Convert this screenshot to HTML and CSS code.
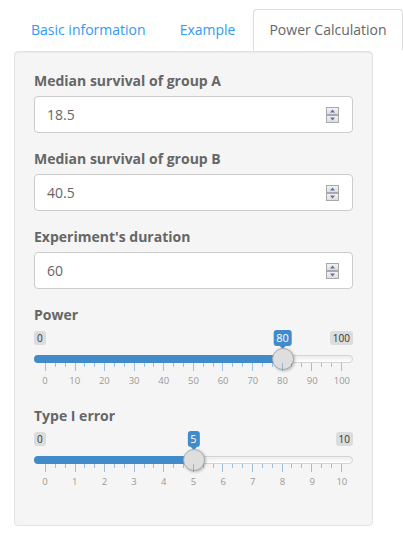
FILE: index.html
```html
<!DOCTYPE html>
<html>
<head>
<meta charset="utf-8">
<link rel="stylesheet" href="styles.css">
</head>
<body>
<div class="page">
  <ul class="tabs">
    <li class="tab"><a>Basic information</a></li>
    <li class="tab"><a>Example</a></li>
    <li class="tab active"><a>Power Calculation</a></li>
  </ul>
  <div class="well">
    <div class="group">
      <label class="lbl">Median survival of group A</label>
      <div class="num"><span class="val">18.5</span>
        <svg class="spin" width="13" height="16" viewBox="0 0 13 16"><defs><linearGradient id="sg" x1="0" y1="0" x2="0" y2="1"><stop offset="0" stop-color="#f4f4f4"/><stop offset="1" stop-color="#dcdcdc"/></linearGradient></defs><rect x="0.5" y="0.5" width="12" height="7" fill="url(#sg)" stroke="#a9a9a9"/><rect x="0.5" y="8.5" width="12" height="7" fill="url(#sg)" stroke="#a9a9a9"/><path d="M4 5.5h5L6.5 2.5z" fill="#5f70a8"/><path d="M4 10.5h5L6.5 13.5z" fill="#5f70a8"/></svg>
      </div>
    </div>
    <div class="group">
      <label class="lbl">Median survival of group B</label>
      <div class="num"><span class="val">40.5</span>
        <svg class="spin" width="13" height="16" viewBox="0 0 13 16"><rect x="0.5" y="0.5" width="12" height="7" fill="url(#sg)" stroke="#a9a9a9"/><rect x="0.5" y="8.5" width="12" height="7" fill="url(#sg)" stroke="#a9a9a9"/><path d="M4 5.5h5L6.5 2.5z" fill="#5f70a8"/><path d="M4 10.5h5L6.5 13.5z" fill="#5f70a8"/></svg>
      </div>
    </div>
    <div class="group">
      <label class="lbl">Experiment's duration</label>
      <div class="num"><span class="val">60</span>
        <svg class="spin" width="13" height="16" viewBox="0 0 13 16"><rect x="0.5" y="0.5" width="12" height="7" fill="url(#sg)" stroke="#a9a9a9"/><rect x="0.5" y="8.5" width="12" height="7" fill="url(#sg)" stroke="#a9a9a9"/><path d="M4 5.5h5L6.5 2.5z" fill="#5f70a8"/><path d="M4 10.5h5L6.5 13.5z" fill="#5f70a8"/></svg>
      </div>
    </div>
    <div class="group">
      <label class="lbl">Power</label>
      <div class="irs">
        <div class="irs-top"><span class="irs-mm">0</span><span class="irs-mm">100</span><span class="irs-single" style="--p:0.8">80</span></div>
        <div class="irs-line"><div class="irs-bar" style="--p:0.8"></div><span class="irs-handle" style="--p:0.8"></span></div>
        <div class="irs-grid">
          <div class="ticks"><i class="b"></i><i></i><i></i><i class="b"></i><i></i><i></i><i class="b"></i><i></i><i></i><i class="b"></i><i></i><i></i><i class="b"></i><i></i><i></i><i class="b"></i><i></i><i></i><i class="b"></i><i></i><i></i><i class="b"></i><i></i><i></i><i class="b"></i><i></i><i></i><i class="b"></i><i></i><i></i><i class="b"></i></div>
          <div class="nums"><span>0</span><span>10</span><span>20</span><span>30</span><span>40</span><span>50</span><span>60</span><span>70</span><span>80</span><span>90</span><span>100</span></div>
        </div>
      </div>
    </div>
    <div class="group">
      <label class="lbl">Type I error</label>
      <div class="irs">
        <div class="irs-top"><span class="irs-mm">0</span><span class="irs-mm">10</span><span class="irs-single" style="--p:0.5">5</span></div>
        <div class="irs-line"><div class="irs-bar" style="--p:0.5"></div><span class="irs-handle" style="--p:0.5"></span></div>
        <div class="irs-grid">
          <div class="ticks"><i class="b"></i><i></i><i></i><i class="b"></i><i></i><i></i><i class="b"></i><i></i><i></i><i class="b"></i><i></i><i></i><i class="b"></i><i></i><i></i><i class="b"></i><i></i><i></i><i class="b"></i><i></i><i></i><i class="b"></i><i></i><i></i><i class="b"></i><i></i><i></i><i class="b"></i><i></i><i></i><i class="b"></i></div>
          <div class="nums"><span>0</span><span>1</span><span>2</span><span>3</span><span>4</span><span>5</span><span>6</span><span>7</span><span>8</span><span>9</span><span>10</span></div>
        </div>
      </div>
    </div>
  </div>
</div>
</body>
</html>
```

FILE: styles.css
```css
* { box-sizing: border-box; }
html, body { margin: 0; background: #fff; }
body {
  font-family: "Open Sans", "Liberation Sans", sans-serif;
  font-size: 14px;
  line-height: 20px;
  color: #666;
}
.page { padding: 9px 0 0 14px; }
.tabs { list-style: none; margin: 0; padding: 0 0 0 1px; display: flex; }
.tab { margin-right: 2px; flex: none; }
.tab a {
  display: block;
  padding: 10px 15px;
  border: 1px solid transparent;
  border-radius: 4px 4px 0 0;
  font-size: 14px;
  line-height: 20px;
  white-space: nowrap;
  color: #3399f3;
  text-decoration: none;
}
.tab.active a {
  color: #666;
  background: #fff;
  border-color: #ddd #ddd transparent;
}
.well {
  width: 359px;
  background: #f5f5f5;
  border: 1px solid #e3e3e3;
  border-radius: 4px;
  padding: 19px 19px 18px;
  box-shadow: inset 0 1px 1px rgba(0,0,0,.05);
}
.group { margin-bottom: 16px; }
.lbl {
  display: block;
  font-weight: bold;
  margin-bottom: 5px;
}
.num {
  display: flex;
  align-items: center;
  height: 37px;
  background: #fff;
  border: 1px solid #ccc;
  border-radius: 4px;
  padding: 0 13px 0 12px;
  color: #666;
}
.val { flex: 1; }
.spin { display: block; }

.irs { height: 60px; }
.irs-top {
  position: relative;
  display: flex;
  justify-content: space-between;
  align-items: flex-start;
  height: 25px;
  padding-top: 1px;
}
.irs-mm {
  font-size: 10px;
  line-height: 12px;
  padding: 1px 3px;
  background: rgba(0,0,0,.1);
  border-radius: 3px;
  color: #333;
}
.irs-single {
  position: absolute;
  top: 0;
  left: calc((100% - 22px) * var(--p) + 11px);
  transform: translateX(-50%);
  font-size: 11px;
  line-height: 13.5px;
  padding: 1px 3px;
  background: #428bca;
  color: #fff;
  border-radius: 3px;
}
.irs-single::before {
  content: "";
  position: absolute;
  bottom: -6px;
  left: 50%;
  margin-left: -3px;
  border: 3px solid transparent;
  border-top-color: #428bca;
}
.irs-line { position: relative; height: 8px; }
.irs-line::before {
  content: "";
  position: absolute;
  inset: 0;
  border: 1px solid #d4d4d4;
  border-radius: 4px;
  background: linear-gradient(to bottom, #ececec, #fff);
}
.irs-bar {
  position: absolute;
  left: 0;
  top: 0;
  height: 8px;
  width: calc((100% - 22px) * var(--p) + 11px);
  background: #428bca;
  border-radius: 4px 0 0 4px;
}
.irs-handle {
  position: absolute;
  top: -7px;
  left: calc((100% - 22px) * var(--p));
  width: 22px;
  height: 22px;
  border: 1px solid #aaa;
  border-radius: 50%;
  background: #dedede;
  box-shadow: 1px 1px 3px rgba(0,0,0,.25);
}
.irs-grid { margin: 0 11px; height: 27px; }
.ticks {
  display: flex;
  justify-content: space-between;
  align-items: flex-start;
  height: 12px;
}
.ticks i { display: block; width: 1px; height: 4px; background: #428bca; opacity: .5; }
.ticks i.b { height: 8px; }
.nums { display: flex; justify-content: space-between; }
.nums span {
  width: 0;
  display: flex;
  justify-content: center;
  white-space: nowrap;
  font-size: 9.5px;
  line-height: 11px;
  color: #999;
}
```
